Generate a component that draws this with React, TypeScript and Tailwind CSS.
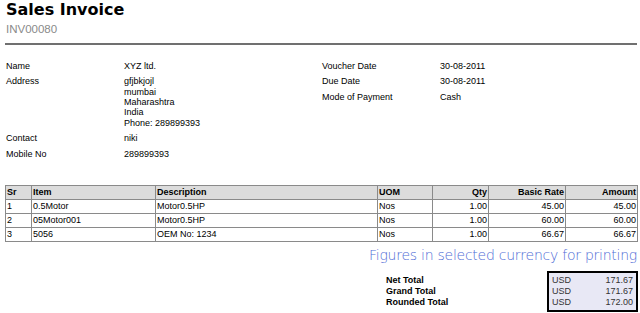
import React from "react";

const rows = [
  ["1", "0.5Motor", "Motor0.5HP", "Nos", "1.00", "45.00", "45.00"],
  ["2", "05Motor001", "Motor0.5HP", "Nos", "1.00", "60.00", "60.00"],
  ["3", "5056", "OEM No: 1234", "Nos", "1.00", "66.67", "66.67"],
];

export default function App() {
  return (
    <div className="w-[640px] h-[313px] bg-white overflow-hidden text-[9px] text-black" style={{ fontFamily: '"Liberation Sans", Arial, sans-serif' }}>
      <div className="pl-[6px] pr-[3px]">
        <div className="h-[20px] leading-[20px] text-[16px] font-bold" style={{ fontFamily: '"DejaVu Sans", sans-serif' }}>Sales Invoice</div>
        <div className="h-[18px] leading-[18px] text-[11.5px] text-[#8a8a8a]">INV00080</div>
        <div className="mt-[5px] ml-[-1px] h-[1.5px] bg-[#707070]" />
      </div>

      <div className="flex pl-[6px] pt-[16px] leading-[10.3px]">
        <div className="w-[316px] flex flex-col gap-[5.6px]">
          <div className="flex"><div className="w-[118px]">Name</div><div>XYZ ltd.</div></div>
          <div className="flex"><div className="w-[118px]">Address</div><div>gfjbkjojl<br />mumbai<br />Maharashtra<br />India<br />Phone: 289899393</div></div>
          <div className="flex"><div className="w-[118px]">Contact</div><div>niki</div></div>
          <div className="flex"><div className="w-[118px]">Mobile No</div><div>289899393</div></div>
        </div>
        <div className="flex flex-col gap-[5.3px]">
          <div className="flex"><div className="w-[118px]">Voucher Date</div><div>30-08-2011</div></div>
          <div className="flex"><div className="w-[118px]">Due Date</div><div>30-08-2011</div></div>
          <div className="flex"><div className="w-[118px]">Mode of Payment</div><div>Cash</div></div>
        </div>
      </div>

      <div className="pl-[5px] pt-[25px]">
        <table className="w-[632px] border-collapse border border-[#555] leading-[12px] table-fixed">
          <colgroup>
            <col className="w-[26px]" />
            <col className="w-[124px]" />
            <col className="w-[222px]" />
            <col className="w-[55px]" />
            <col className="w-[56px]" />
            <col className="w-[77px]" />
            <col className="w-[72px]" />
          </colgroup>
          <thead>
            <tr className="bg-[#dcdcdc] font-bold h-[14px]">
              <td className="border border-[#8a8a8a] px-[1px]">Sr</td>
              <td className="border border-[#8a8a8a] px-[1px]">Item</td>
              <td className="border border-[#8a8a8a] px-[1px]">Description</td>
              <td className="border border-[#8a8a8a] px-[1px]">UOM</td>
              <td className="border border-[#8a8a8a] px-[1px] text-right">Qty</td>
              <td className="border border-[#8a8a8a] px-[1px] text-right">Basic Rate</td>
              <td className="border border-[#8a8a8a] px-[1px] text-right">Amount</td>
            </tr>
          </thead>
          <tbody>
            {rows.map((r) => (
              <tr key={r[0]} className="h-[14px]">
                <td className="border border-[#8a8a8a] px-[1px]">{r[0]}</td>
                <td className="border border-[#8a8a8a] px-[1px]">{r[1]}</td>
                <td className="border border-[#8a8a8a] px-[1px]">{r[2]}</td>
                <td className="border border-[#8a8a8a] px-[1px]">{r[3]}</td>
                <td className="border border-[#8a8a8a] px-[1px] text-right">{r[4]}</td>
                <td className="border border-[#8a8a8a] px-[1px] text-right">{r[5]}</td>
                <td className="border border-[#8a8a8a] px-[1px] text-right">{r[6]}</td>
              </tr>
            ))}
          </tbody>
        </table>
      </div>

      <div className="flex justify-end pr-[3px] pt-[4px]">
        <div className="text-[14px] leading-[18px] text-[#4f6cd6] font-light tracking-[-0.25px]" style={{ fontFamily: '"DejaVu Sans", sans-serif' }}>Figures in selected currency for printing</div>
      </div>

      <div className="flex pt-[7px] leading-[11px]">
        <div className="ml-[386px] w-[161px] pt-[4px] font-bold">
          <div>Net Total</div>
          <div>Grand Total</div>
          <div>Rounded Total</div>
        </div>
        <div className="w-[91px] border-2 border-black bg-[#e8e8f5] text-[#333] px-[3px] py-[2px]">
          <div className="flex justify-between"><span>USD</span><span>171.67</span></div>
          <div className="flex justify-between"><span>USD</span><span>171.67</span></div>
          <div className="flex justify-between"><span>USD</span><span>172.00</span></div>
        </div>
      </div>
    </div>
  );
}
